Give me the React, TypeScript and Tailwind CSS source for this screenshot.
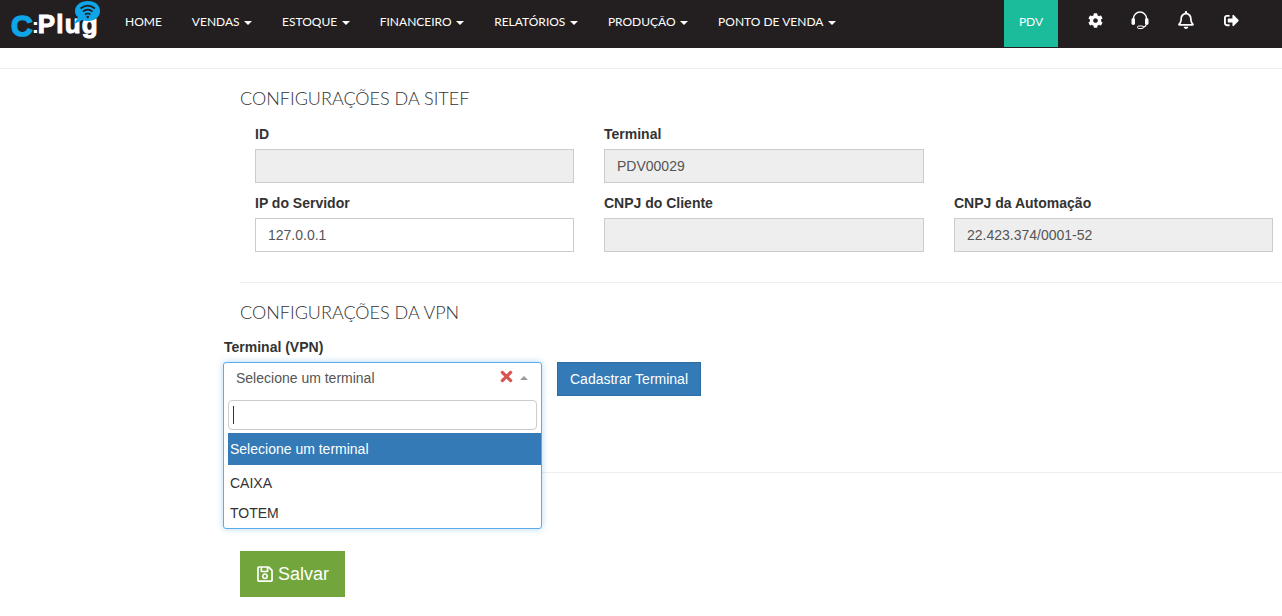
import { FaCog, FaRegBell, FaRegSave, FaSignOutAlt, FaTimes } from 'react-icons/fa';

const NAV = ['VENDAS', 'ESTOQUE', 'FINANCEIRO', 'RELATÓRIOS', 'PRODUÇÃO', 'PONTO DE VENDA'];

function Logo() {
  return (
    <div className="relative w-[125px] h-[48px] shrink-0">
      <div className="absolute left-[11px] top-[11px] w-[92px] flex items-start font-['Liberation_Sans',sans-serif] font-bold">
        <span className="text-[#0ea5e9] text-[30px] leading-[30px] [-webkit-text-stroke:1.5px_#0ea5e9]">C</span>
        <span className="text-white text-[22px] leading-[22px] w-[6px] -ml-[1px] mt-[4px]">:</span>
        <span className="text-white text-[26px] leading-[26px] [-webkit-text-stroke:1px_white] tracking-[1.2px]">Plug</span>
      </div>
      <svg className="absolute left-[72px] top-0" width="29" height="25" viewBox="0 0 29 25">
        <path d="M16 1c7 0 12 4 12 10s-5 10-12 10c-2 0-4-.5-5.500-1L2 24l4-7C3.500 15.500 3 13 3 11 3 5 9 1 16 1z" fill="#0ea5e9" />
        <path d="M8.500 8.500c4.500-3.500 10-3.500 14.500 0M11 11.500c3-2.300 6.500-2.300 9.500 0M13 14.500c1.700-1.200 3.800-1.200 5.500 0" fill="none" stroke="#231f20" strokeWidth="1.600" />
        <circle cx="15.700" cy="17" r="1.300" fill="#231f20" />
      </svg>
    </div>
  );
}

function Headset() {
  return (
    <svg width="18" height="18" viewBox="0 0 18 18" fill="none">
      <path d="M2.500 9V7.500a6.500 6.500 0 0 1 13 0V9" stroke="white" strokeWidth="1.400" />
      <rect x="0.500" y="7" width="3.500" height="7" rx="1.700" fill="white" />
      <rect x="14" y="7" width="3.500" height="7" rx="1.700" fill="white" />
      <path d="M15 13.500c0 1.500-1.500 2.500-3.500 2.500" stroke="white" strokeWidth="1.200" />
      <rect x="6.500" y="15" width="6" height="2.500" rx="1.200" stroke="white" strokeWidth="1" />
    </svg>
  );
}

function Caret() {
  return <span className="inline-block ml-[4.5px] align-middle w-0 h-0 border-x-4 border-x-transparent border-t-4 border-t-white" />;
}

function Field({ label, value, disabled }: { label: string; value?: string; disabled?: boolean }) {
  return (
    <div>
      <div className="text-[14px] leading-[20px] font-bold text-[#333] mb-[5px]">{label}</div>
      <div className={`h-[34px] border border-[#ccc] px-3 text-[14px] leading-[32px] text-[#555] ${disabled ? 'bg-[#eee]' : 'bg-white'}`}>
        {value}
      </div>
    </div>
  );
}

export default function App() {
  return (
    <div className="w-[1282px] h-[616px] overflow-hidden bg-white font-['Liberation_Sans',sans-serif]">
      <header className="h-[48px] bg-[#231f20] flex items-start text-white">
        <Logo />
        <nav className="flex items-center gap-[30px] font-['Lato',sans-serif] text-[12px] leading-[43px]">
          <span>HOME</span>
          {NAV.map((n) => (
            <span key={n}>
              {n}
              <Caret />
            </span>
          ))}
        </nav>
        <div className="ml-auto flex items-start h-[48px]">
          <div className="w-[54px] h-[47px] bg-[#1abc9c] text-[12px] leading-[43px] text-center font-['Lato',sans-serif]">PDV</div>
          <div className="flex items-center w-[224px] h-[40px] pl-[30px]">
            <FaCog size={15} />
            <span className="ml-[28px]"><Headset /></span>
            <FaRegBell size={18} className="ml-[28px]" />
            <FaSignOutAlt size={15} className="ml-[29px]" />
          </div>
        </div>
      </header>

      <main className="pt-[20px]">
        <div className="border-t border-[#eee]" />
        <div className="ml-[240px]">
          <h2 className="font-['Lato',sans-serif] font-light text-[18px] leading-[20px] text-[#333] mt-[19px]">CONFIGURAÇÕES DA SITEF</h2>
          <div className="ml-[15px] mt-[16px] grid grid-cols-[319px_320px_319px] gap-x-[30px] gap-y-[10px]">
            <Field label="ID" disabled />
            <Field label="Terminal" value="PDV00029" disabled />
            <div />
            <Field label="IP do Servidor" value="127.0.0.1" />
            <Field label="CNPJ do Cliente" disabled />
            <Field label="CNPJ da Automação" value="22.423.374/0001-52" disabled />
          </div>
          <div className="border-t border-[#eee] mt-[30px]" />
          <h2 className="font-['Lato',sans-serif] font-light text-[18px] leading-[20px] text-[#333] mt-[19px]">CONFIGURAÇÕES DA VPN</h2>
          <div className="-ml-[16px] mt-[15px] text-[14px] leading-[20px] font-bold text-[#333]">Terminal (VPN)</div>
          <div className="-ml-[17px] mt-[5px] flex items-start h-[110px]">
            <div className="relative w-[319px] h-[34px]">
              <div className="absolute inset-x-0 top-0 z-10 h-[167px] bg-white border border-[#5dacea] rounded-[3px] shadow-[0_0_6px_rgba(102,175,233,0.5)] text-[14px]">
                <div className="h-[30px] flex items-center pl-[12px] pr-[13px] text-[#555]">
                  <span className="flex-1">Selecione um terminal</span>
                  <FaTimes size={17} className="text-[#d9534f] mr-[5px] -mt-[3px]" />
                  <span className="w-0 h-0 border-x-4 border-x-transparent border-b-4 border-b-[#999]" />
                </div>
                <div className="mx-[4px] mt-[7px] h-[30px] border border-[#ccc] rounded-[4px] flex items-center pl-[4px]">
                  <span className="w-px h-[18px] bg-[#333]" />
                </div>
                <div className="ml-[4px] mt-[3px] h-[32px] bg-[#337ab7] text-white leading-[32px] pl-[2px]">Selecione um terminal</div>
                <div className="ml-[4px] mt-[3px] h-[30px] text-[#333] leading-[30px] pl-[2px]">CAIXA</div>
                <div className="ml-[4px] h-[30px] text-[#333] leading-[30px] pl-[2px]">TOTEM</div>
              </div>
            </div>
            <button className="ml-[15px] h-[34px] w-[144px] bg-[#337ab7] border border-[#2e6da4] text-white text-[14px]">Cadastrar Terminal</button>
          </div>
          <div className="border-t border-[#eee]" />
          <button className="mt-[78px] w-[105px] h-[46px] bg-[#72a53b] text-white text-[18px] flex items-center justify-center gap-[4px]">
            <FaRegSave size={18} />
            Salvar
          </button>
        </div>
      </main>
    </div>
  );
}
